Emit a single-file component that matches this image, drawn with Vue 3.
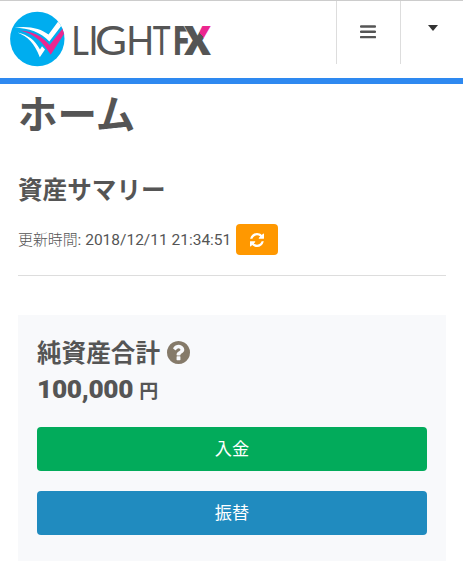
<script setup>
import { ref } from 'vue';

const updated = ref('2018/12/11 21:34:51');
const total = ref(100000);

const actions = [
  { label: '入金', type: 'deposit' },
  { label: '振替', type: 'transfer' },
];

// wordmark letters, each stretched to its own width
const letters = [
  { c: 'L', x: 71.2, w: 17.6 },
  { c: 'I', x: 88.4, w: 10 },
  { c: 'G', x: 95.1, w: 32 },
  { c: 'H', x: 126.2, w: 28 },
  { c: 'T', x: 152.8, w: 17.8 },
];

function formatYen(n) {
  return n.toLocaleString('en-US');
}
</script>

<template>
  <div class="page">
    <header class="header">
      <svg class="logo" width="220" height="76" viewBox="0 0 220 76">
        <defs>
          <clipPath id="logo-circle"><circle cx="37.3" cy="39" r="27.2" /></clipPath>
          <linearGradient id="x-fill" gradientUnits="userSpaceOnUse" x1="187" y1="45.5" x2="215" y2="25.5">
            <stop offset="0.52" stop-color="#555" />
            <stop offset="0.52" stop-color="#ec268f" />
          </linearGradient>
        </defs>
        <circle cx="37.3" cy="39" r="27.2" fill="#00adef" />
        <g clip-path="url(#logo-circle)">
          <path d="M14.500 27.500C29 25.500 41 28.500 48.500 34.500L58.500 21L62 25L49.300 41.500C41 32 29 28.500 14.500 27.500Z" fill="#fff" />
          <path d="M20 30.500C32 31 42 36 49.500 45L64 27V34L50.700 54.800C43 42 34 33.500 20 30.500Z" fill="#ec268f" />
          <path d="M17.500 32.500C28 34.800 35 40 40 49.500L42 46.200L45 49.500L39.800 57.200C34.500 43 27.500 36.500 17.500 32.500Z" fill="#fff" />
        </g>
        <text v-for="l in letters" :key="l.c" class="logo-light" :x="l.x" y="55" :textLength="l.w" lengthAdjust="spacingAndGlyphs">{{ l.c }}</text>
        <text class="logo-fx" x="173.5" y="55" textLength="15.5" lengthAdjust="spacingAndGlyphs">F</text>
        <text class="logo-fx logo-x" x="184" y="55" textLength="27" lengthAdjust="spacingAndGlyphs">X</text>
      </svg>
      <nav class="nav">
        <button class="nav-item" aria-label="menu">
          <svg width="16" height="14" viewBox="0 0 16 14">
            <path d="M1 1.5H15M1 6.8H15M1 12.1H15" stroke="#555" stroke-width="2.4" stroke-linecap="round" />
          </svg>
        </button>
        <button class="nav-item" aria-label="account">
          <span class="caret"></span>
        </button>
      </nav>
    </header>

    <main class="content">
      <h1>ホーム</h1>
      <h2>資産サマリー</h2>
      <div class="updated">
        <span class="time"><span class="time-label">更新時間</span>: {{ updated }}</span>
        <button class="refresh" aria-label="refresh">
          <svg width="14" height="14" viewBox="0 0 1536 1536" fill="#fff">
            <path d="M1511 928q0 5-1 7-64 268-268 434.500t-478 166.500q-146 0-282.500-55t-243.500-157l-129 129q-19 19-45 19t-45-19-19-45v-448q0-26 19-45t45-19h448q26 0 45 19t19 45-19 45l-137 137q71 66 161 102t187 36q134 0 250-65t186-179q11-17 53-117 8-23 30-23h192q13 0 22.500 9.500t9.500 22.500zm25-800v448q0 26-19 45t-45 19h-448q-26 0-45-19t-19-45 19-45l138-138q-148-137-349-137-134 0-250 65t-186 179q-11 17-53 117-8 23-30 23h-199q-13 0-22.500-9.500t-9.500-22.500v-7q65-268 270-434.500t480-166.500q146 0 284 55.500t245 156.500l130-129q19-19 45-19t45 19 19 45z" />
          </svg>
        </button>
      </div>

      <section class="panel">
        <div class="panel-title">
          <span>純資産合計</span>
          <svg width="23" height="23" viewBox="0 0 1536 1536" fill="#857a69">
            <path d="M896 1248v-192q0-14-9-23t-23-9h-192q-14 0-23 9t-9 23v192q0 14 9 23t23 9h192q14 0 23-9t9-23zm256-672q0-88-55.500-163t-138.500-116-170-41q-243 0-371 213-15 24 8 42l132 100q7 6 19 6 16 0 25-12 53-68 86-92 34-24 86-24 48 0 85.500 26t37.500 59q0 38-20 61t-68 45q-63 28-115.500 86.500t-52.500 125.500v36q0 14 9 23t23 9h192q14 0 23-9t9-23q0-19 21.500-49.500t54.500-49.500q32-18 49-28.500t46-35 44.500-48 28-60.500 12.500-81zm384 192q0 209-103 385.500t-279.500 279.500-385.500 103-385.500-103-279.500-279.500-103-385.500 103-385.500 279.500-279.500 385.500-103 385.500 103 279.500 279.500 103 385.500z" />
          </svg>
        </div>
        <div class="amount">{{ formatYen(total) }} <small>円</small></div>
        <button v-for="a in actions" :key="a.type" class="btn" :class="a.type">{{ a.label }}</button>
      </section>
    </main>
  </div>
</template>

<style>
body {
  margin: 0;
  background: #fff;
}
</style>

<style scoped>
.page {
  height: 561px;
  overflow: hidden;
  box-sizing: border-box;
  color: #555;
  font-family: Roboto, 'Noto Sans CJK JP', sans-serif;
}

button {
  border: 0;
  padding: 0;
  font-family: inherit;
}

.header {
  display: flex;
  justify-content: space-between;
  box-sizing: border-box;
  height: 84px;
  border-top: 1px solid #ccc;
  border-bottom: 6px solid #2e89f0;
}

.logo {
  display: block;
  margin-top: -1px;
}

.logo-light {
  font-family: Lato, sans-serif;
  font-size: 41px;
  fill: #555;
}

.logo-fx {
  font-family: Roboto, sans-serif;
  font-weight: 900;
  font-size: 41.5px;
  fill: #555;
}

.logo-x {
  fill: url(#x-fill);
  stroke: #fff;
  stroke-width: 1px;
  paint-order: stroke;
}

.nav {
  display: flex;
  height: 63px;
}

.nav-item {
  display: flex;
  align-items: center;
  justify-content: center;
  box-sizing: border-box;
  width: 64px;
  padding: 0 1px 1px 0;
  background: none;
  border-left: 1px solid #ddd;
}

.nav-item:last-child {
  width: 63px;
}

.caret {
  margin: 0 0 8px 3px;
  border: 5.5px solid transparent;
  border-top: 6px solid #333;
  border-bottom: 0;
}

.content {
  padding: 0 17px 0 18px;
}

h1 {
  margin: 0;
  padding-top: 3px;
  font-size: 39.5px;
  line-height: 58px;
}

h2 {
  margin: 31px 0 0;
  font-size: 24.6px;
  line-height: 30px;
}

.updated {
  display: flex;
  align-items: center;
  gap: 5px;
  height: 31px;
  margin-top: 18px;
  padding-bottom: 20px;
  border-bottom: 1px solid #ddd;
  font-size: 15.5px;
  white-space: nowrap;
}

.time {
  width: 213px;
  padding-bottom: 3px;
}

.time-label {
  font-size: 14.9px;
  font-weight: 300;
}

.refresh {
  display: flex;
  align-items: center;
  justify-content: center;
  width: 42px;
  height: 31px;
  border-radius: 4px;
  background: #ff9800;
}

.panel {
  margin-top: 39px;
  padding: 20px 19px 27px;
  background: #f8f9fb;
}

.panel-title {
  display: flex;
  align-items: center;
  gap: 7px;
  height: 35px;
  font-size: 24.6px;
  font-weight: 700;
}

.panel-title span {
  padding-bottom: 3px;
}

.amount {
  height: 37px;
  line-height: 39px;
  font-size: 26.3px;
  font-weight: 900;
  letter-spacing: -0.35px;
}

.amount small {
  font-size: 19px;
  font-weight: 700;
}

.btn {
  display: block;
  width: 100%;
  height: 44px;
  margin-top: 20px;
  padding-bottom: 4px;
  border-radius: 4px;
  color: #fff;
  font-size: 17.2px;
}

.deposit {
  background: #02ab5b;
}

.transfer {
  background: #208bbf;
}
</style>
